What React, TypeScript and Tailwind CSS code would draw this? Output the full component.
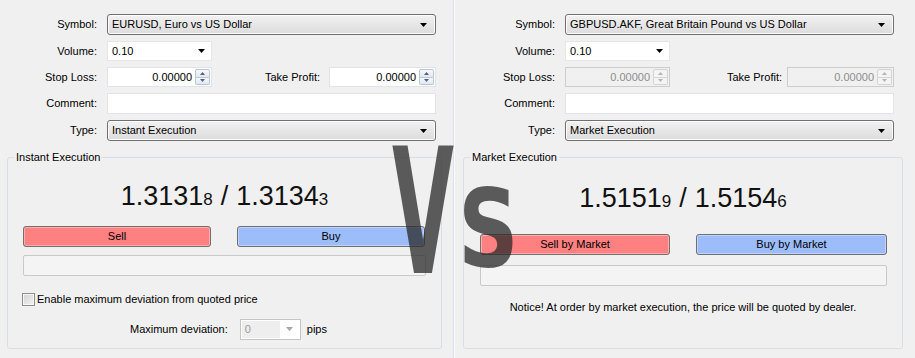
import type { ReactNode } from 'react'

const font = "font-['Liberation_Sans',Arial,sans-serif]"

function Arrow({ color = '#000' }: { color?: string }) {
  return (
    <svg width="7" height="4" viewBox="0 0 7 4" className="shrink-0">
      <path d="M0 0H7L3.5 4Z" fill={color} />
    </svg>
  )
}

function Combo({ value }: { value: string }) {
  return (
    <div className="flex h-full w-full items-center justify-between rounded-[3px] border border-[#707070] bg-gradient-to-b from-[#f2f2f2] to-[#dcdcdc] pl-[4px] pr-[8px] shadow-[inset_0_0_0_1px_#fcfcfc]">
      <span>{value}</span>
      <Arrow />
    </div>
  )
}

function Spinner({ disabled }: { disabled?: boolean }) {
  const fill = disabled ? '#b4b4b4' : '#4d6185'
  const cell = disabled
    ? 'border-[#d4d4d4] bg-[#f4f4f4]'
    : 'border-[#b9c6d3] bg-gradient-to-b from-[#f6f8fa] to-[#e2e8ee]'
  return (
    <div className="flex h-full w-[15px] shrink-0 flex-col py-[1px]">
      <div className={`flex flex-1 items-center justify-center rounded-t-[2px] border ${cell}`}>
        <svg width="5" height="3" viewBox="0 0 5 3">
          <path d="M0 3H5L2.5 0Z" fill={fill} />
        </svg>
      </div>
      <div className={`flex flex-1 items-center justify-center rounded-b-[2px] border border-t-0 ${cell}`}>
        <svg width="5" height="3" viewBox="0 0 5 3">
          <path d="M0 0H5L2.5 3Z" fill={fill} />
        </svg>
      </div>
    </div>
  )
}

function SpinEdit({ value, disabled, width }: { value: string; disabled?: boolean; width: string }) {
  return (
    <div
      className={`flex h-full shrink-0 items-center gap-[3px] border pr-[1px] ${width} ${
        disabled ? 'border-[#cdcdcd] bg-[#f0f0f0] text-[#8d8d8d]' : 'border-[#e2e3ea] bg-white'
      }`}
    >
      <span className="flex-1 text-right">{value}</span>
      <Spinner disabled={disabled} />
    </div>
  )
}

function Row({ label, h, children }: { label: string; h: string; children: ReactNode }) {
  return (
    <div className={`flex items-center gap-[10px] ${h}`}>
      <span className="w-[97px] shrink-0 text-right">{label}</span>
      <div className="flex h-full w-[329px] items-center">{children}</div>
    </div>
  )
}

function Form({ symbol, type, disabled, tpGap }: { symbol: string; type: string; disabled?: boolean; tpGap: string }) {
  return (
    <div className="flex flex-col gap-[6px] pt-[14px]">
      <Row label="Symbol:" h="h-[21px]">
        <Combo value={symbol} />
      </Row>
      <Row label="Volume:" h="h-[20px]">
        <div className="flex h-full w-[105px] items-center justify-between border border-[#e6e6e6] bg-white pl-[4px] pr-[6px]">
          <span>0.10</span>
          <Arrow />
        </div>
      </Row>
      <Row label="Stop Loss:" h="h-[20px]">
        <div className="flex h-full w-full items-center justify-between">
          <SpinEdit value="0.00000" disabled={disabled} width="w-[105px]" />
          <div className={`flex h-full items-center ${tpGap}`}>
            <span>Take Profit:</span>
            <SpinEdit value="0.00000" disabled={disabled} width="w-[107px]" />
          </div>
        </div>
      </Row>
      <Row label="Comment:" h="h-[21px]">
        <div className="h-full w-full border border-[#e2e3ea] bg-white" />
      </Row>
      <Row label="Type:" h="h-[21px]">
        <Combo value={type} />
      </Row>
    </div>
  )
}

function TradeButton({ label, color, width }: { label: string; color: string; width: string }) {
  return (
    <div
      className={`flex h-[21px] items-center justify-center rounded-[3px] border border-[#707070] shadow-[inset_0_0_0_1px_rgba(255,255,255,0.35)] ${color} ${width}`}
    >
      {label}
    </div>
  )
}

function Price({ big1, small1, big2, small2 }: { big1: string; small1: string; big2: string; small2: string }) {
  return (
    <div className="flex items-baseline justify-center leading-[30px] text-[#111]">
      <span className="text-[27px]">{big1}</span>
      <span className="text-[17px]">{small1}</span>
      <span className="px-[8px] text-[27px]">/</span>
      <span className="text-[27px]">{big2}</span>
      <span className="text-[17px]">{small2}</span>
    </div>
  )
}

export default function App() {
  return (
    <div className={`relative flex h-[358px] w-[915px] overflow-hidden bg-[#f0f0f0] text-[11px] text-black ${font}`}>
      {/* Instant execution window */}
      <div className="w-[454px] shrink-0 border-r border-[#d9e2ee]">
        <Form symbol="EURUSD, Euro vs US Dollar" type="Instant Execution" tpGap="gap-[9px]" />
        <fieldset className="ml-[7px] mt-[10px] h-[198px] w-[435px] rounded-[3px] border border-[#d5dfe5]">
          <legend className="ml-[6px] px-[2px] leading-[13px]">Instant Execution</legend>
          <div className="mt-[17px]">
            <Price big1="1.3131" small1="8" big2="1.3134" small2="3" />
          </div>
          <div className="mt-[11px] flex gap-[26px] pl-[15px]">
            <TradeButton label="Sell" color="bg-[#ff8080]" width="w-[188px]" />
            <TradeButton label="Buy" color="bg-[#9cbcfa]" width="w-[188px]" />
          </div>
          <div className="ml-[15px] mt-[8px] h-[21px] w-[403px] rounded-[2px] border border-[#c9c9c9] bg-[#f4f4f4]" />
          <div className="ml-[14px] mt-[15px] flex items-center gap-[2px]">
            <div className="h-[13px] w-[13px] border border-[#8e8f8f] bg-gradient-to-br from-[#d2d2d2] to-[#f4f4f4] shadow-[inset_0_0_0_1px_#f6f6f6]" />
            <span>Enable maximum deviation from quoted price</span>
          </div>
          <div className="mt-[11px] flex h-[21px] items-center justify-center pl-[8px]">
            <span>Maximum deviation:</span>
            <div className="ml-[12px] flex h-full w-[61px] items-center border border-[#c5c5c5] bg-white p-[1px]">
              <div className="flex h-full w-[38px] items-center bg-[#eeeeee] pl-[3px] text-[#9a9a9a]">0</div>
              <div className="flex flex-1 items-center justify-center">
                <Arrow color="#a6a6a6" />
              </div>
            </div>
            <span className="ml-[6px]">pips</span>
          </div>
        </fieldset>
      </div>

      {/* Market execution window */}
      <div className="flex-1 border-l border-[#fbfbfb] pl-[3px]">
        <Form symbol="GBPUSD.AKF, Great Britain Pound vs US Dollar" type="Market Execution" disabled tpGap="gap-[5px]" />
        <fieldset className="ml-[5px] mt-[10px] h-[198px] w-[440px] rounded-[3px] border border-[#d5dfe5]">
          <legend className="ml-[6px] px-[2px] leading-[13px]">Market Execution</legend>
          <div className="mt-[19px]">
            <Price big1="1.5151" small1="9" big2="1.5154" small2="6" />
          </div>
          <div className="mt-[17px] flex gap-[26px] pl-[16px]">
            <TradeButton label="Sell by Market" color="bg-[#ff8080]" width="w-[190px]" />
            <TradeButton label="Buy by Market" color="bg-[#9cbcfa]" width="w-[191px]" />
          </div>
          <div className="ml-[16px] mt-[10px] h-[21px] w-[407px] rounded-[2px] border border-[#c9c9c9] bg-[#f4f4f4]" />
          <p className="mt-[13px] text-center">Notice! At order by market execution, the price will be quoted by dealer.</p>
        </fieldset>
      </div>

      {/* VS overlay */}
      <span className="pointer-events-none absolute left-[392px] top-[126px] origin-top-left scale-x-[0.46] font-['DejaVu_Sans',sans-serif] text-[174px] font-bold leading-none text-[rgba(40,40,40,0.75)]">
        V
      </span>
      <span className="pointer-events-none absolute left-[458px] top-[175px] origin-top-left scale-x-[0.78] font-['DejaVu_Sans',sans-serif] text-[108px] font-bold leading-none text-[rgba(40,40,40,0.75)]">
        S
      </span>
    </div>
  )
}
